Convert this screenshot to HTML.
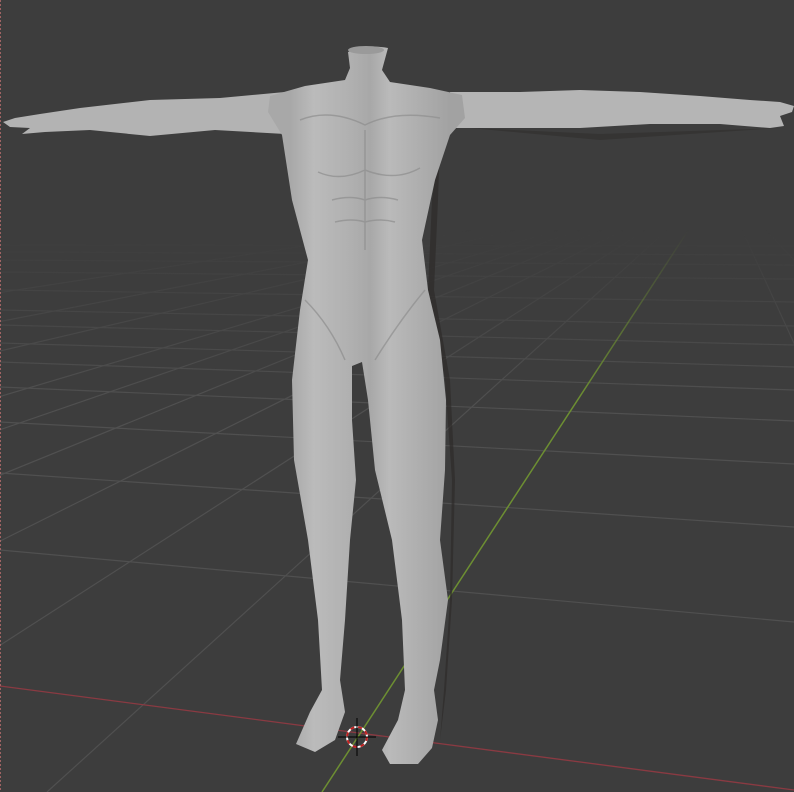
<!DOCTYPE html>
<html><head><style>
html,body{margin:0;padding:0;background:#3d3d3d;}
svg{display:block;}
</style></head><body>
<svg width="794" height="792" viewBox="0 0 794 792" xmlns="http://www.w3.org/2000/svg">
<defs>
<linearGradient id="fade" gradientUnits="userSpaceOnUse" x1="0" y1="230" x2="0" y2="400">
<stop offset="0" stop-color="#fff" stop-opacity="0"/>
<stop offset="1" stop-color="#fff" stop-opacity="1"/>
</linearGradient>
<mask id="m" maskUnits="userSpaceOnUse" x="0" y="0" width="794" height="792"><rect x="0" y="0" width="794" height="792" fill="url(#fade)"/></mask>
<linearGradient id="leg" gradientUnits="userSpaceOnUse" x1="290" y1="0" x2="450" y2="0">
<stop offset="0" stop-color="#a8a8a8"/>
<stop offset="0.15" stop-color="#bbbbbb"/>
<stop offset="0.38" stop-color="#b0b0b0"/>
<stop offset="0.5" stop-color="#a8a8a8"/>
<stop offset="0.62" stop-color="#bababa"/>
<stop offset="1" stop-color="#a2a2a2"/>
</linearGradient>
</defs>
<rect width="794" height="792" fill="#3d3d3d"/>
<g stroke="#505050" stroke-width="1.2" mask="url(#m)" fill="none">
<line x1="0" y1="245" x2="794" y2="246"/>
<line x1="0" y1="252" x2="794" y2="255"/>
<line x1="0" y1="260" x2="794" y2="265"/>
<line x1="0" y1="272" x2="794" y2="279"/>
<line x1="0" y1="290" x2="794" y2="302"/>
<line x1="0" y1="310" x2="794" y2="326"/>
<line x1="0" y1="325" x2="794" y2="345"/>
<line x1="0" y1="343" x2="794" y2="367"/>
<line x1="0" y1="362" x2="794" y2="390"/>
<line x1="0" y1="387" x2="794" y2="421"/>
<line x1="0" y1="422" x2="794" y2="464"/>
<line x1="0" y1="473" x2="794" y2="527"/>
<line x1="0" y1="550" x2="794" y2="622"/>
<line x1="720" y1="182" x2="-3253" y2="792"/>
<line x1="720" y1="182" x2="-2428" y2="792"/>
<line x1="720" y1="182" x2="-1878" y2="792"/>
<line x1="720" y1="182" x2="-1328" y2="792"/>
<line x1="720" y1="182" x2="-1053" y2="792"/>
<line x1="720" y1="182" x2="-778" y2="792"/>
<line x1="720" y1="182" x2="-503" y2="792"/>
<line x1="720" y1="182" x2="-228" y2="792"/>
<line x1="720" y1="182" x2="47" y2="792"/>
<line x1="720" y1="182" x2="1000" y2="792"/>
<line x1="720" y1="182" x2="1300" y2="792"/>
<line x1="720" y1="182" x2="1700" y2="792"/>
</g>
<line x1="0" y1="686" x2="794" y2="790" stroke="#8a3a42" stroke-width="1.3"/>
<line x1="708" y1="200" x2="322" y2="792" stroke="#6d8f32" stroke-width="1.5" mask="url(#m)"/>
<line x1="0" y1="0" x2="0" y2="792" stroke="#c07070" stroke-width="1.5" stroke-dasharray="2,2"/>

<path d="M440,140 L432,200 L428,290 L445,380 L452,480 L450,600 L444,690 L440,740 L446,690 L452,600 L455,480 L450,380 L434,290 L438,200 Z" fill="#2e2b29" opacity="0.7"/>
<path d="M470,128 L600,140 L780,128 L600,134 Z" fill="#2e2b29" opacity="0.5"/>
<path d="M285,92 L220,98 L150,100 L80,108 L40,114 L15,118 L3,122 L10,127 L30,128 L22,134 L45,132 L90,130 L150,136 L215,130 L285,134 Z" fill="#b3b3b3"/>
<path d="M450,92 L520,92 L580,90 L640,92 L700,96 L750,100 L780,102 L794,106 L792,112 L780,116 L784,126 L770,128 L720,124 L650,124 L580,128 L520,128 L455,128 Z" fill="#b5b5b5"/>
<path d="M348,52 Q368,44 388,48 L382,70 L390,82 L430,88 L462,95 L465,118 L450,135 L435,180 L422,240 L428,290 L440,340 L446,400 L445,470 L440,540 L448,600 L440,660 L434,690 L438,720 L432,748 L418,764 L390,764 L382,750 L398,720 L405,690 L402,620 L392,540 L375,470 L368,400 L362,362 L352,366 L352,420 L356,480 L350,540 L345,620 L340,680 L345,712 L335,740 L315,752 L296,744 L310,712 L322,690 L318,620 L308,540 L294,460 L292,380 L300,310 L308,260 L292,200 L282,135 L268,112 L270,96 L305,86 L345,80 L350,68 Z" fill="url(#leg)"/>
<g fill="none" stroke="#8e8e8e" stroke-width="1.5" opacity="0.7">
<path d="M300,120 Q330,108 365,125 Q395,110 440,118"/>
<path d="M318,172 Q340,182 365,170 Q395,182 420,168"/>
<path d="M332,200 Q350,195 365,200 Q380,195 398,200"/>
<path d="M335,222 Q352,218 365,222 Q380,218 395,222"/>
<path d="M365,130 L365,250"/>
<path d="M305,300 Q330,325 345,360"/>
<path d="M425,290 Q400,320 375,360"/>
</g>
<ellipse cx="366" cy="50" rx="18" ry="4" fill="#9a9a9a"/>
<circle cx="357" cy="737" r="10" fill="none" stroke="#fff" stroke-width="2"/>
<circle cx="357" cy="737" r="10" fill="none" stroke="#c02020" stroke-width="2" stroke-dasharray="4,4"/>
<line x1="357" y1="718" x2="357" y2="756" stroke="#000" stroke-width="1"/>
<line x1="338" y1="737" x2="376" y2="737" stroke="#000" stroke-width="1"/>
</svg>
</body></html>
